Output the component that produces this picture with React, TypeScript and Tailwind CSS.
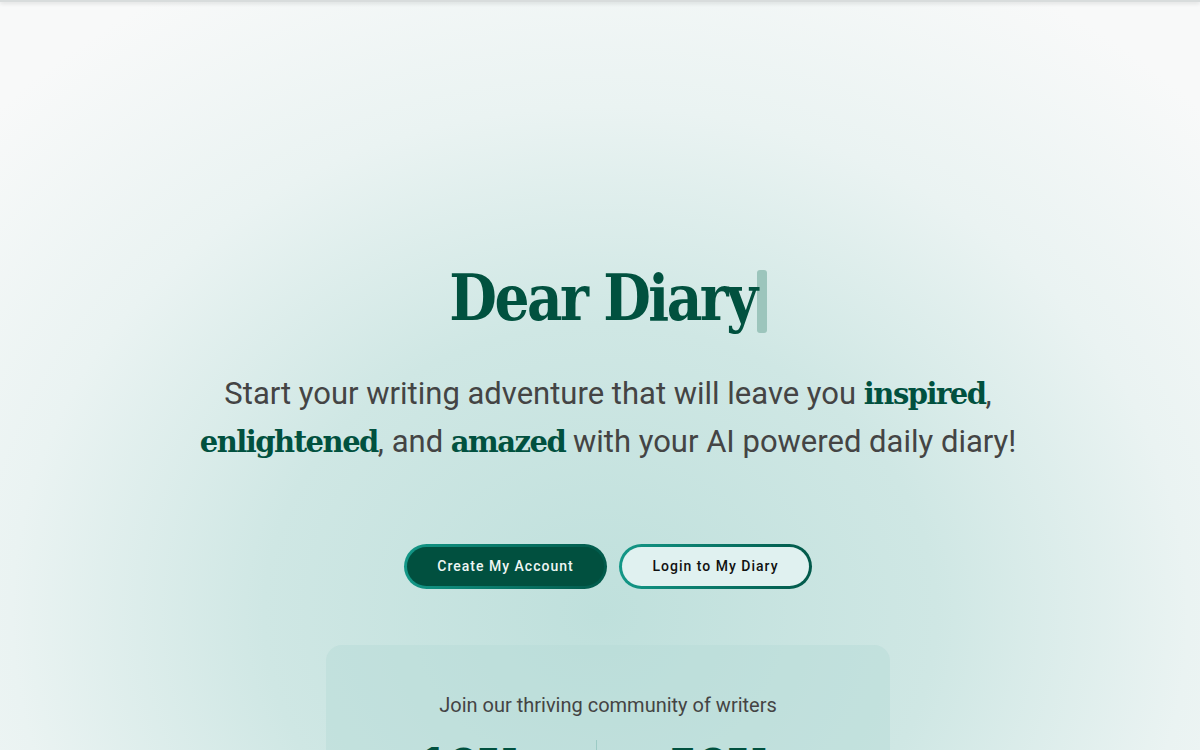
import React from "react"

const slab = "font-['DejaVu_Serif',serif] font-bold"

export default function App() {
  return (
    <div className="relative min-h-[750px] w-full overflow-hidden bg-[radial-gradient(ellipse_70%_85%_at_50%_72%,#bfe0dc_0%,#cfe7e4_40%,#eaf3f2_70%,#f8f9f9_100%)] font-['Roboto',sans-serif]">
      {/* top bar shadow */}
      <div className="h-[2px] w-full bg-[#d8dcdc] shadow-[0_1px_4px_rgba(0,0,0,0.18)]" />

      <main className="flex flex-col items-center pl-4 pt-[256px]">
        {/* title */}
        <h1 className="flex items-center">
          <span className={`${slab} inline-block scale-y-[1.15] text-[55px] leading-[80px] tracking-[-2.5px] text-[#01513f]`}>
            Dear Diary
          </span>
          <span className="ml-[1px] mt-[6px] h-[63px] w-[10px] rounded-[3px] bg-[#9cc5bc]" />
        </h1>

        {/* tagline */}
        <p className="mt-[32px] whitespace-nowrap text-center text-[31px] leading-[48px] text-[#444444]">
          Start your writing adventure that will leave you{" "}
          <span className={`${slab} text-[29px] tracking-[-1.5px] text-[#01513f]`}>inspired</span>,
          <br />
          <span className={`${slab} text-[29px] tracking-[-1.5px] text-[#01513f]`}>enlightened</span>, and{" "}
          <span className={`${slab} text-[29px] tracking-[-1.5px] text-[#01513f]`}>amazed</span> with your AI powered daily diary!
        </p>

        {/* buttons */}
        <div className="mt-[78px] flex gap-3">
          <button className="h-[45px] w-[203px] rounded-full bg-gradient-to-r from-[#139787] to-[#02594a] p-[3px]">
            <span className="flex h-full w-full items-center justify-center rounded-full bg-[#01503f] text-[14px] font-medium tracking-[1px] text-[#eef6f4]">
              Create My Account
            </span>
          </button>
          <button className="h-[45px] w-[193px] rounded-full bg-gradient-to-r from-[#139787] to-[#02594a] p-[3px]">
            <span className="flex h-full w-full items-center justify-center rounded-full bg-[#e0f1f0] text-[14px] font-medium tracking-[1px] text-[#111111]">
              Login to My Diary
            </span>
          </button>
        </div>

        {/* community card */}
        <section className="mt-[56px] w-[564px] rounded-2xl bg-[#b8dbd7]/50 pt-[48px] pb-10">
          <p className="text-center text-[20px] leading-6 text-[#444444]">
            Join our thriving community of writers
          </p>
          <div className="mt-[21px] flex">
            <div className="flex w-[270px] flex-col items-end pr-[44px]">
              <span className={`${slab} text-[46px] leading-[56px] tracking-[-2px] text-[#01513f]`}>10K+</span>
              <span className="text-sm text-[#444444]">Active Writers</span>
            </div>
            <div className="mt-[2px] h-[70px] w-px bg-[#9ccbc5]" />
            <div className="flex flex-col items-start pl-[70px]">
              <span className={`${slab} text-[46px] leading-[56px] tracking-[-2px] text-[#01513f]`}>50K</span>
              <span className="text-sm text-[#444444]">Diary Entries</span>
            </div>
          </div>
        </section>
      </main>
    </div>
  )
}
